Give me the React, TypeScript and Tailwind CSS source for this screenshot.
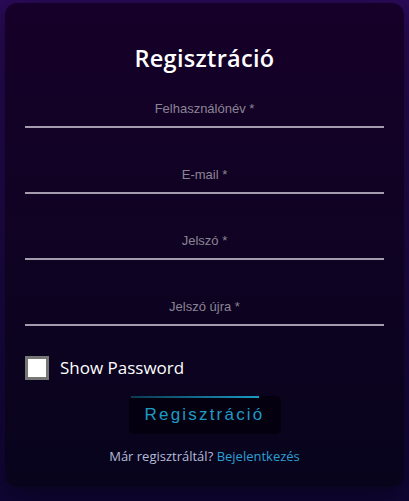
import { useState } from "react";

type FieldProps = { label: string; type?: string };

function Field({ label, type = "text" }: FieldProps) {
    return (
        <div className="w-full h-[66px] flex flex-col justify-end">
            <input
                type={type}
                placeholder={label}
                className="w-full bg-transparent border-0 border-b-2 border-[#a49cae] text-center text-[13px] text-[#d0c8d8] placeholder:text-[#8b8494] pb-[8px] outline-none font-['Liberation_Sans',Arial,sans-serif]"
            />
        </div>
    );
}

export default function App() {
    const [show, setShow] = useState(false);

    return (
        <div className="w-[409px] h-[501px] overflow-hidden bg-gradient-to-b from-[#2a0a58] to-[#100636] pt-[3px] px-[5px]">
            <div className="w-full h-[484px] rounded-[12px] bg-gradient-to-b from-[#160029] to-[#08041c] shadow-[0_10px_30px_rgba(0,0,0,0.45)] px-[20px] pt-[40px] flex flex-col items-center font-['Open_Sans',sans-serif]">
                <h1 className="text-white text-[23.5px] font-semibold leading-[30px] tracking-[0.3px]">Regisztráció</h1>
                <form className="w-full flex flex-col items-center mt-[-11px]" onSubmit={(e) => e.preventDefault()}>
                    <Field label="Felhasználónév *" />
                    <Field label="E-mail *" />
                    <Field label="Jelszó *" type={show ? "text" : "password"} />
                    <Field label="Jelszó újra *" type={show ? "text" : "password"} />

                    <label className="self-start flex items-center gap-[11px] mt-[30px] cursor-pointer">
                        <input
                            type="checkbox"
                            checked={show}
                            onChange={(e) => setShow(e.target.checked)}
                            className="appearance-none w-[24px] h-[24px] bg-white border-[3px] border-[#767676] checked:bg-[#1a9cc4]"
                        />
                        <span className="text-white text-[17px] leading-[24px]">Show Password</span>
                    </label>

                    <button
                        type="submit"
                        className="relative mt-[16px] w-[152px] h-[38px] rounded-[5px] bg-[#05000f] text-[#1d9bc6] text-[17px] tracking-[2.2px] font-['Liberation_Sans',Arial,sans-serif]"
                    >
                        <span className="absolute left-[2px] top-0 w-[128px] h-[2px] bg-gradient-to-r from-[#0b3a52] to-[#1a9cc4]" />
                        Regisztráció
                    </button>

                    <p className="mt-[13px] text-[13px] text-[#b3bbd6]">
                        Már regisztráltál? <a href="#" className="text-[#2b9fd2]">Bejelentkezés</a>
                    </p>
                </form>
            </div>
        </div>
    );
}
